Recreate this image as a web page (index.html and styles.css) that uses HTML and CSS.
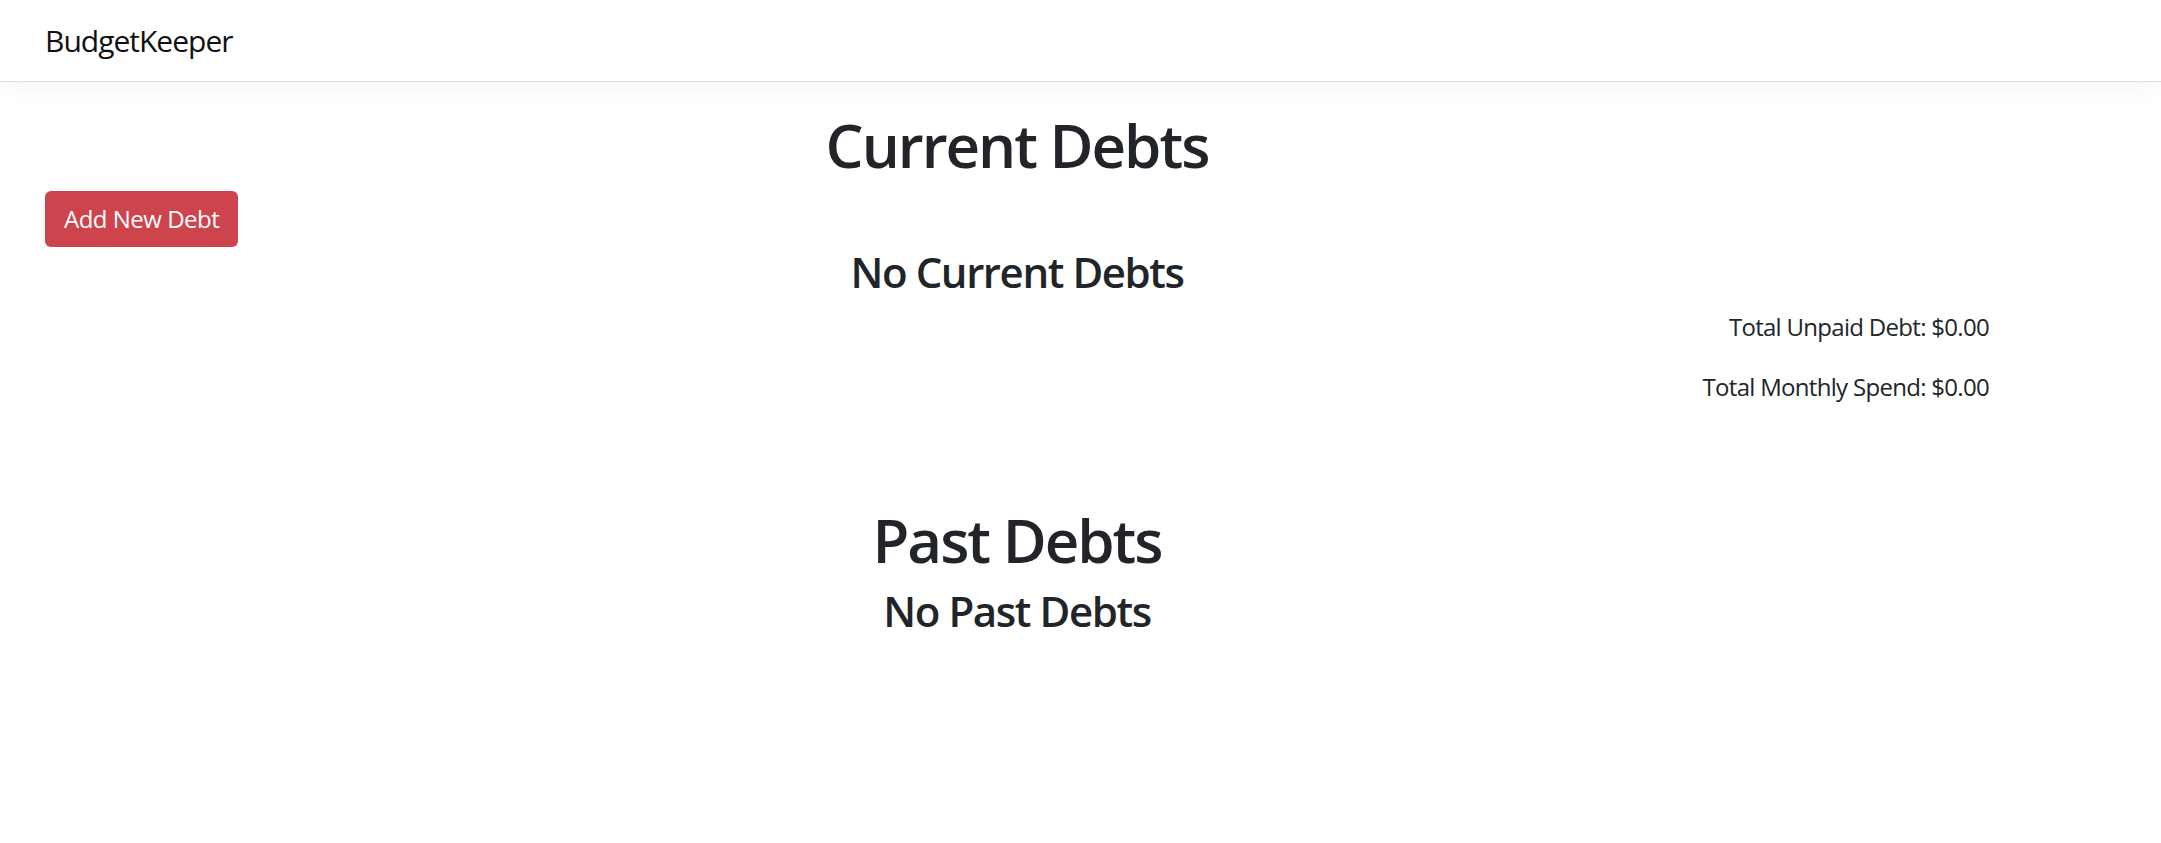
FILE: index.html
```html
<!DOCTYPE html>
<html lang="en">
<head>
<meta charset="utf-8">
<title>BudgetKeeper</title>
<link rel="stylesheet" href="styles.css">
</head>
<body>
<nav class="navbar">
  <a class="brand" href="#">BudgetKeeper</a>
</nav>
<main class="page">
  <section class="section">
    <h1 class="title">Current Debts</h1>
    <div class="actions">
      <button class="btn-danger" type="button">Add New Debt</button>
    </div>
    <h3 class="empty">No Current Debts</h3>
    <div class="totals">
      <p class="total">Total Unpaid Debt: $0.00</p>
      <p class="total">Total Monthly Spend: $0.00</p>
    </div>
  </section>
  <section class="section past">
    <h1 class="title">Past Debts</h1>
    <h3 class="empty">No Past Debts</h3>
  </section>
</main>
</body>
</html>
```
FILE: styles.css
```css
* { box-sizing: border-box; }
html, body { margin: 0; padding: 0; }
body {
  font-family: "Open Sans", "Noto Sans", "Liberation Sans", sans-serif;
  font-size: 24px;
  line-height: 1.5;
  letter-spacing: -0.7px;
  color: #212529;
  background: #fff;
}
.navbar {
  height: 82px;
  display: flex;
  align-items: center;
  padding: 0 45px;
  border-bottom: 1px solid #e0e0e6;
  box-shadow: 0 2px 24px rgba(0, 0, 0, 0.05);
  position: relative;
}
.brand {
  font-size: 30px;
  letter-spacing: -1px;
  color: #111;
  text-decoration: none;
  line-height: 1;
}
.page {
  width: 1944px;
  margin-left: 45px;
  padding-top: 27px;
}
.section { display: flex; flex-direction: column; }
.title {
  margin: 0 0 10px;
  font-size: 60px;
  font-weight: 600;
  letter-spacing: -2px;
  line-height: 1.2;
  text-align: center;
}
.actions { display: flex; }
.btn-danger {
  font-family: inherit;
  font-size: 24px;
  letter-spacing: -0.5px;
  line-height: 36px;
  color: #fff;
  background: #cd444d;
  border: 0;
  border-radius: 6px;
  padding: 10px 19px;
  cursor: pointer;
}
.empty {
  margin: 0;
  font-size: 42px;
  font-weight: 600;
  letter-spacing: -1.4px;
  line-height: 1.2;
  text-align: center;
}
.totals { text-align: right; margin-top: 12px; }
.total { margin: 0 0 24px; }
.past { margin-top: 75px; }
```
